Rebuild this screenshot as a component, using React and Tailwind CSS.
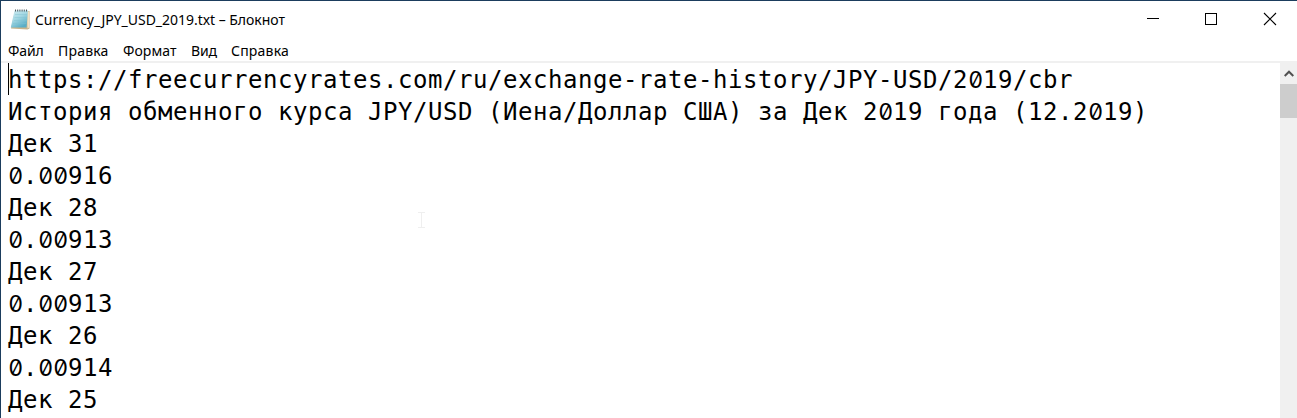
import React from "react";

const lines = [
  "https://freecurrencyrates.com/ru/exchange-rate-history/JPY-USD/2019/cbr",
  "История обменного курса JPY/USD (Иена/Доллар США) за Дек 2019 года (12.2019)",
  "Дек 31",
  "0.00916",
  "Дек 28",
  "0.00913",
  "Дек 27",
  "0.00913",
  "Дек 26",
  "0.00914",
  "Дек 25",
];

const menus = [
  ["Файл", "w-[50px] tracking-[-0.15px]"],
  ["Правка", "w-[65px] tracking-[0.2px]"],
  ["Формат", "w-[68px] tracking-[0.05px]"],
  ["Вид", "w-[40px] tracking-[-0.2px]"],
  ["Справка", "w-[70px] tracking-[0.2px]"],
];

// Zeros use a slashed form, centred in the same 15px column as other characters.
function Line({ text }) {
  return (
    <div className="h-8 whitespace-pre">
      {text.split(/(0)/).map((part, i) =>
        part === "0" ? (
          <span
            key={i}
            className="inline-block w-[15px] text-center font-['Inter'] text-[23px] tracking-[-0.5px] [font-feature-settings:'zero','tnum']"
          >
            0
          </span>
        ) : (
          part
        )
      )}
    </div>
  );
}

function NotepadIcon() {
  return (
    <svg width="22" height="22" viewBox="0 0 22 22">
      <defs>
        <linearGradient id="page" x1="0" y1="0" x2="0.6" y2="1">
          <stop offset="0" stopColor="#d3edf2" />
          <stop offset="0.5" stopColor="#a3d7e3" />
          <stop offset="1" stopColor="#58adc6" />
        </linearGradient>
      </defs>
      <path d="M5 2H19.5V19.5L17.5 20.5L1 19.5Z" fill="#c9b48b" />
      <path d="M17 2.5H19V18.5L17.5 19.5Z" fill="#f0e2c6" />
      <path d="M4.5 1.5H18L16.5 18.5H0.8Z" fill="url(#page)" />
      <path d="M5 5.5H17M4.5 8.5H17M4 11.5H16.5M3 14.5H16" stroke="#7fc2d2" strokeWidth="0.6" opacity="0.7" />
      <path d="M5 1.5H18" stroke="#4e5a60" strokeWidth="2" strokeDasharray="1 1.2" />
    </svg>
  );
}

export default function App() {
  return (
    <div className="flex h-[418px] w-[1297px] flex-col overflow-hidden border-t border-l border-[#1b3d5d] bg-white text-black">
      <header className="flex h-[37px] shrink-0 items-center font-['Noto_Sans','Open_Sans',sans-serif]">
        <div className="ml-[9px] h-[22px] w-[22px]">
          <NotepadIcon />
        </div>
        <h1 className="ml-[3px] flex-1 text-[14px] leading-[20px] tracking-[-0.03px] whitespace-nowrap">
          Currency_JPY_USD_2019.txt – Блокнот
        </h1>
        <div className="flex h-full w-[177px] text-black">
          <svg width="177" height="37" viewBox="0 0 177 37" fill="none" stroke="currentColor">
            <path d="M27 17.5H39" shapeRendering="crispEdges" />
            <rect x="85.5" y="12.5" width="11" height="11" shapeRendering="crispEdges" />
            <path d="M144 12L156 24M156 12L144 24" strokeWidth="1.1" />
          </svg>
        </div>
      </header>
      <nav className="flex h-[23px] shrink-0 items-center pt-[3px] pl-[7px] font-['Noto_Sans','Open_Sans',sans-serif] text-[14px] leading-[20px]">
        {menus.map(([label, cls]) => (
          <span key={label} className={"whitespace-nowrap " + cls}>
            {label}
          </span>
        ))}
      </nav>
      <div className="h-[2px] shrink-0 bg-[#f0f0f0]" />
      <main className="flex min-h-0 flex-1">
        <div className="relative min-w-0 flex-1 overflow-hidden pt-px pl-[7px] font-['DejaVu_Sans_Mono',monospace] text-[24px] leading-[32px] tracking-[0.55px]">
          {lines.map((t, i) => (
            <Line key={i} text={t} />
          ))}
          <div className="absolute top-0 left-[7px] h-8 w-px bg-black" />
          <svg className="absolute top-[149px] left-[416px]" width="8" height="17" fill="none" stroke="#efefef">
            <path d="M1 0.5H8M1 15.5H8M4.5 1V15" />
          </svg>
        </div>
        <div className="w-[17px] bg-[#f0f0f0]">
          <div className="flex h-[21px] items-center justify-center">
            <svg width="10" height="7" viewBox="0 0 10 7" fill="none" stroke="#505050" strokeWidth="2">
              <path d="M0.7 6L5 1.7L9.3 6" />
            </svg>
          </div>
          <div className="h-[34px] bg-[#cdcdcd]" />
        </div>
      </main>
    </div>
  );
}
